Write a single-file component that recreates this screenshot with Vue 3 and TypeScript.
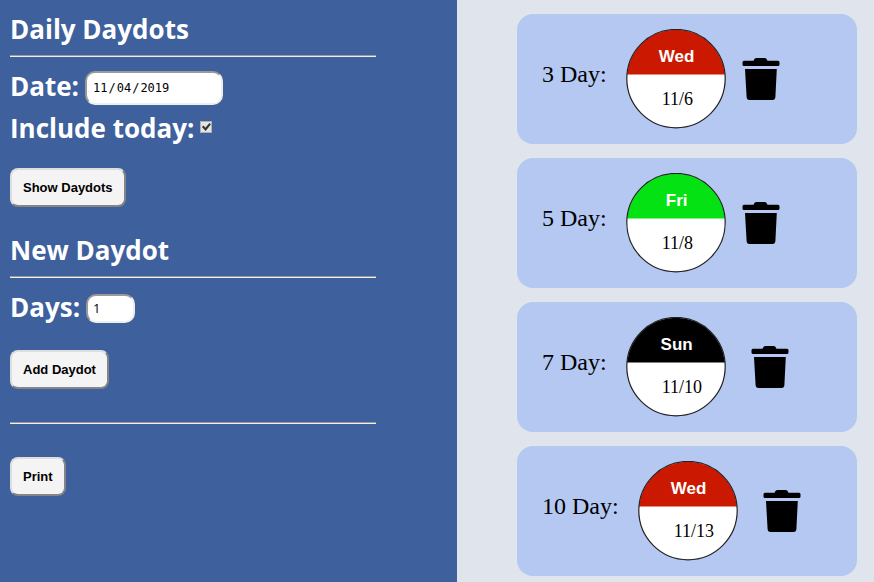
<script setup lang="ts">
import { computed, ref } from 'vue'

interface Dot {
  days: number
  weekday: string
  date: string
  color: string
}

const names = ['Sun', 'Mon', 'Tue', 'Wed', 'Thu', 'Fri', 'Sat']
const colors = ['#000000', '#0a53d8', '#f2c500', '#cb1800', '#8a4b14', '#04e213', '#f07800']

const date = ref('2019-11-04')
const includeToday = ref(true)
const newDays = ref(1)
const lengths = ref<number[]>([3, 5, 7, 10])
const shown = ref({ date: date.value, includeToday: includeToday.value })

const dots = computed<Dot[]>(() =>
  lengths.value.map((days) => {
    const [y, m, d] = shown.value.date.split('-').map(Number)
    const end = new Date(y, m - 1, d + days - (shown.value.includeToday ? 1 : 0))
    return {
      days,
      weekday: names[end.getDay()],
      date: `${end.getMonth() + 1}/${end.getDate()}`,
      color: colors[end.getDay()],
    }
  }),
)

function showDots() {
  if (date.value) shown.value = { date: date.value, includeToday: includeToday.value }
}

function addDot() {
  if (newDays.value > 0 && !lengths.value.includes(newDays.value)) {
    lengths.value = [...lengths.value, newDays.value].sort((a, b) => a - b)
  }
}

function removeDot(days: number) {
  lengths.value = lengths.value.filter((n) => n !== days)
}

function printPage() {
  window.print()
}
</script>

<template>
  <div class="page">
    <aside class="panel">
      <form @submit.prevent="showDots">
        <h2>Daily Daydots</h2>
        <hr />
        <div class="field">
          <label for="date">Date:</label>
          <input id="date" v-model="date" class="box date" type="date" />
        </div>
        <div class="field">
          <label for="today">Include today:</label>
          <input id="today" v-model="includeToday" class="tick" type="checkbox" />
        </div>
        <button class="action" type="submit">Show Daydots</button>
      </form>
      <form @submit.prevent="addDot">
        <h2>New Daydot</h2>
        <hr />
        <div class="field">
          <label for="days">Days:</label>
          <input id="days" v-model.number="newDays" class="box days" type="number" min="1" />
        </div>
        <button class="action" type="submit">Add Daydot</button>
      </form>
      <hr class="divider" />
      <button class="action" type="button" @click="printPage">Print</button>
    </aside>

    <main class="list">
      <section v-for="dot in dots" :key="dot.days" class="card">
        <span class="length">{{ dot.days }} Day:</span>
        <div class="dot">
          <svg class="disc" viewBox="0 0 100 100" aria-hidden="true">
            <circle cx="50" cy="49.6" r="49.2" fill="#fff" />
            <path d="M1 45.5A49.2 49.2 0 0 1 99 45.5Z" :fill="dot.color" />
            <circle cx="50" cy="49.6" r="49.2" fill="none" stroke="#222" stroke-width="1.2" />
          </svg>
          <span class="weekday">{{ dot.weekday }}</span>
          <span class="when">{{ dot.date }}</span>
        </div>
        <button class="trash" type="button" aria-label="Remove" @click="removeDot(dot.days)">
          <svg viewBox="0 0 38 42" aria-hidden="true">
            <path
              d="M14 0H23Q24.500 0 25.500 2.800H36Q37.500 2.800 37.500 4.300V6.500Q37.500 8 36 8H2Q.5 8 .5 6.500V4.300Q.5 2.800 2 2.800H11.500Q12.500 0 14 0ZM3 11H34.800L33.400 39Q33.200 42 30.500 42H7.500Q4.800 42 4.600 39Z"
            />
          </svg>
        </button>
      </section>
    </main>
  </div>
</template>

<style>
body {
  margin: 0;
}
</style>

<style scoped>
.page {
  display: grid;
  grid-template-columns: 457fr 417fr;
  min-height: 100vh;
  background: #e0e4ec;
}

.panel {
  box-sizing: border-box;
  padding: 10px 0 10px 10px;
  background: #3e609d;
  color: #fff;
}

h2,
label {
  margin: 0;
  padding-bottom: 2px;
  font: 700 26px/38px 'Open Sans', 'Noto Sans', sans-serif;
}

hr {
  width: calc(80% + 8px);
  margin: 5px 0 9px;
  border: 1px solid;
  border-color: #9a9a9a #eee #eee #9a9a9a;
  border-width: 1px 0;
}

.field {
  display: flex;
  align-items: center;
  gap: 6px;
  height: 42px;
}

form + form {
  margin-top: 24px;
}

.box {
  box-sizing: border-box;
  border: 2px solid;
  border-color: #9a9a9a #eee #eee #9a9a9a;
  border-radius: 10px;
  background: #fff;
  color: #000;
}

.date {
  width: 138px;
  height: 34px;
  margin: 2px 0 0;
  padding: 0 5px;
  font: 12px 'DejaVu Sans Mono', monospace;
}

.date::-webkit-calendar-picker-indicator {
  display: none;
}

.days {
  width: 49px;
  height: 29px;
  padding: 0 5px;
  font: 13px 'Open Sans', sans-serif;
  appearance: textfield;
}

.days::-webkit-inner-spin-button {
  appearance: none;
}

.tick {
  display: grid;
  place-items: center;
  box-sizing: border-box;
  width: 12px;
  height: 12px;
  margin: 0 0 4px;
  appearance: none;
  border: 1px solid #b0b0b0;
  background: #e4e4e4;
}

.tick:checked::before {
  width: 9px;
  height: 8px;
  background: #333;
  clip-path: polygon(0 50%, 18% 32%, 38% 58%, 84% 0, 100% 16%, 42% 100%);
  content: '';
}

.action {
  display: block;
  height: 39px;
  margin-top: 18px;
  padding: 0 11px;
  border: 2px solid;
  border-color: #dedede #858585 #858585 #dedede;
  border-radius: 8px;
  background: #f4f4f4;
  color: #000;
  font: 700 13px 'Liberation Sans', Arial, sans-serif;
}

form + form .action {
  margin-top: 21px;
}

.divider {
  margin: 33px 0;
}

.list {
  display: flex;
  flex-direction: column;
  gap: 14px;
  padding: 14px 17px 6px 60px;
}

.card {
  display: flex;
  align-items: center;
  box-sizing: border-box;
  height: 130px;
  padding-left: 25px;
  border-radius: 16px;
  background: #b4c8f2;
}

.length {
  margin: 0 19px 10px 0;
  font: 24px 'Liberation Serif', 'Times New Roman', serif;
}

.dot {
  display: grid;
  grid-template-rows: 45px 55px;
  align-items: center;
}

.disc {
  grid-area: 1 / 1 / 3 / 2;
  width: 100px;
  height: 100px;
}

.weekday {
  grid-area: 1 / 1;
  width: 102px;
  padding-top: 10px;
  color: #fff;
  font: 700 17px/20px 'Liberation Sans', Arial, sans-serif;
  text-align: center;
}

.when {
  grid-area: 2 / 1;
  padding: 0 49px 6px 36px;
  font: 18px/20px 'Liberation Serif', 'Times New Roman', serif;
}

.trash {
  padding: 0;
  border: 0;
  background: none;
  color: #000;
  cursor: pointer;
}

.trash svg {
  display: block;
  width: 38px;
  height: 42px;
  fill: currentColor;
}
</style>
